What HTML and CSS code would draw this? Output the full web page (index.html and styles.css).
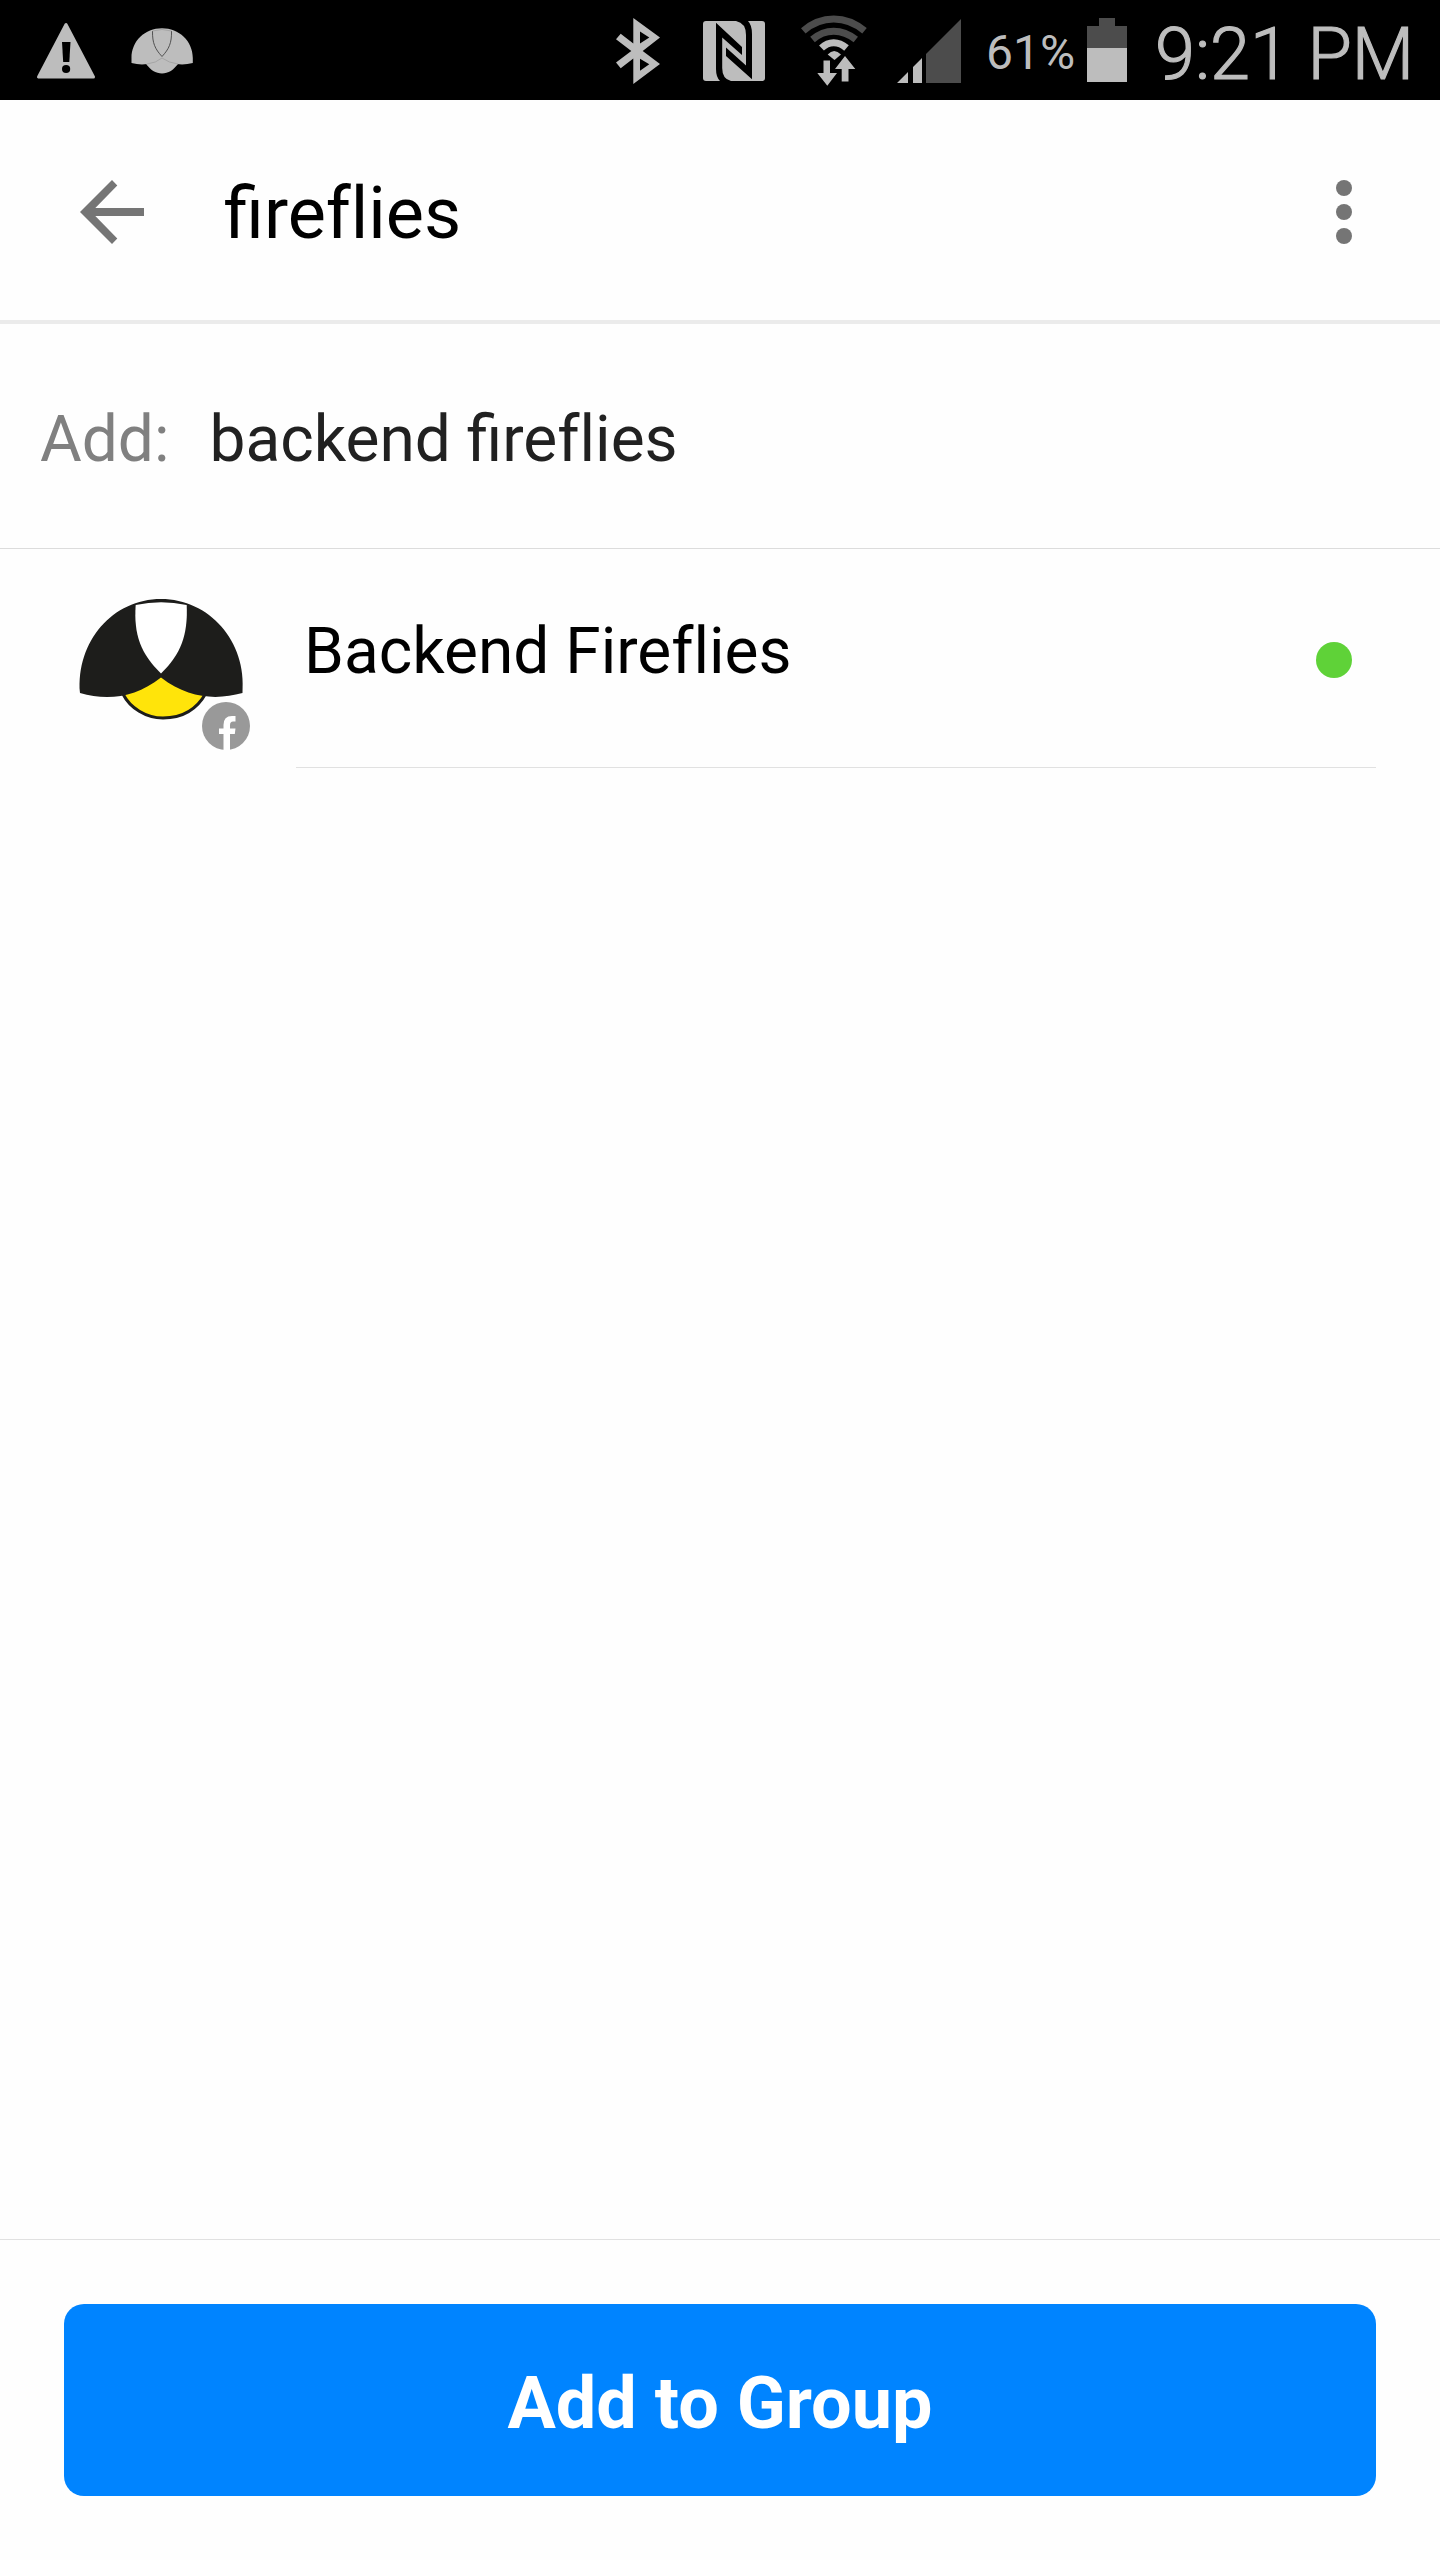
FILE: index.html
```html
<!DOCTYPE html>
<html lang="en">
<head>
<meta charset="utf-8">
<title>fireflies</title>
<link rel="stylesheet" href="styles.css">
</head>
<body>
<div class="screen">
  <div class="status-bar">
    <svg class="status-icon" width="70" height="100" viewBox="30 0 70 100">
      <path d="M66 24.5 38.500 77H93.500Z" fill="#bdbdbd" stroke="#bdbdbd" stroke-width="3" stroke-linejoin="round"/>
      <path d="M62 42h8.500l-1.200 20h-6.100z"/>
      <circle cx="66.100" cy="69" r="4.100"/>
    </svg>
    <svg class="status-icon firefly-small" width="70" height="100" viewBox="128 0 70 100">
      <path d="M145.500 63C150 70 156 73.500 162 73.500S174 70 178.500 63L162 56Z" fill="#bdbdbd"/>
      <path d="M131.500 63V58C131.500 41 145 28.300 162 28.300S192.800 41 192.800 58V63C181 66 170 64 162 58C154 64 143 66 131.500 63Z" fill="#bdbdbd"/>
      <path d="M152.500 31C152.300 43 155 49 162 56.500C169 49 171.800 43 171.500 31" fill="none" stroke="#444" stroke-width="0.900"/>
      <path d="M152.500 31Q162 28 171.500 31M147 64Q156 63 162 58Q169 63 178 64" fill="none" stroke="#a5a5a5" stroke-width="1"/>
    </svg>
    <div class="status-right">
      <svg class="status-icon" width="70" height="100" viewBox="606 0 70 100">
        <path fill-rule="evenodd" d="M633.300 18 660 37.500 642.700 51 660 64 633.300 84V58.500L620.700 68.300 616 62.500 631.300 51 616 39.200 620.700 33.700 633.300 43.500ZM640 31.500V43.500L649.300 37.500ZM640 58.700V70.700L649.300 64.300Z" fill="#bdbdbd"/>
      </svg>
      <svg class="status-icon" width="70" height="100" viewBox="702 0 70 100">
        <rect x="703" y="21" width="62" height="60" rx="3" fill="#bdbdbd"/>
        <path d="M716 22.700 742 47V55L722.200 37.500V68Q722.200 79 731 81H720Q716 77 716 69Z"/>
        <path d="M752 79.300 726 56V47.500L746 65.500V35Q746 23 736 21H748Q752 25 752 34Z"/>
      </svg>
      <svg class="status-icon" width="70" height="100" viewBox="798 0 70 100">
        <g fill="none" stroke="#4c4c4c" stroke-width="7">
          <path d="M803.300 30.800Q817 19 833.700 19T864.500 30.800"/>
          <path d="M812.500 39.500Q822 31.200 833.700 31.200T855.800 39.500"/>
        </g>
        <path d="M821.500 48Q827 42.700 833.700 42.700T846.500 48" fill="none" stroke="#bdbdbd" stroke-width="7"/>
        <path d="M827.700 54.500Q834 47.500 841 54.500L834.500 60Z" fill="#bdbdbd"/>
        <path d="M823.500 60.500H830V73H837L827.300 85.700 817.300 73H823.500ZM845 56 855.300 69H848.500V81.500H841.700V69H835Z" fill="#bdbdbd"/>
      </svg>
      <svg class="status-icon" width="70" height="100" viewBox="894 0 70 100">
        <path d="M961 19V83H926V54Z" fill="#4c4c4c"/>
        <path d="M897 83 908 72V83ZM913 83V67L922 58V83Z" fill="#bdbdbd"/>
      </svg>
      <span class="battery-level">61%</span>
      <svg class="status-icon battery" width="40" height="100" viewBox="1087 0 40 100" shape-rendering="crispEdges">
        <path d="M1099 18H1115V26H1127V48H1087V26H1099Z" fill="#4c4c4c"/>
        <path d="M1087 48H1127V82H1087Z" fill="#bdbdbd"/>
      </svg>
      <span class="clock">9:21 PM</span>
    </div>
  </div>

  <header class="app-bar">
    <svg class="back" width="64" height="64" viewBox="0 0 64 64">
      <path d="M64 28H15.300L37.300 5.600 32 0 0 32 32 64 37.300 58.400 15.300 36H64Z" fill="#757575"/>
    </svg>
    <h1 class="title">firef&zwnj;lies</h1>
    <svg class="more" width="16" height="64" viewBox="0 0 16 64" fill="#757575">
      <circle cx="8" cy="8" r="8"/><circle cx="8" cy="32" r="8"/><circle cx="8" cy="56" r="8"/>
    </svg>
  </header>

  <div class="add-row">
    <span class="add-label">Add:</span>
    <span class="add-value">backend firef&zwnj;lies</span>
  </div>

  <main class="results">
    <div class="contact">
      <svg class="avatar" width="180" height="180" viewBox="72 582 180 180">
        <path d="M123 694C130 708 146 718 163 718S196 711 206 693L161 675Z" fill="#ffe40a" stroke="#1d1d1b" stroke-width="3"/>
        <path d="M80 693C76 641 113 599 161 599S247 641 242.500 693C217 700 189 699 161 677.500C135 698 107 701 80 693Z" fill="#1d1d1b"/>
        <path d="M135.700 605Q161 599.500 186.700 605C188 635 181 654 161 673.500C141 654 133.500 635 135.700 605Z" fill="#fff"/>
        <circle cx="226" cy="726" r="24" fill="#999"/>
        <path d="M223.500 750V734H219V728.500H223.500V725Q223.500 716 232 716H235.500V721.500H233Q230 721.500 230 725V728.500H235.500L234.800 734H230V750Z" fill="#fff"/>
      </svg>
      <div class="contact-body">
        <span class="contact-name">Backend Firef&zwnj;lies</span>
        <span class="online"></span>
      </div>
    </div>
  </main>

  <footer class="action-bar">
    <button class="add-button">Add to Group</button>
  </footer>
</div>
</body>
</html>
```

FILE: styles.css
```css
* { box-sizing: border-box; }

body {
  margin: 0;
  background: #fff;
  font-family: Roboto, "Noto Sans", sans-serif;
}

.screen {
  display: flex;
  flex-direction: column;
  width: 1440px;
  height: 2560px;
  background: #fefefe;
}

.status-bar {
  display: flex;
  height: 100px;
  padding-left: 30px;
  background: #000;
  color: #bdbdbd;
}

.status-icon { flex: none; display: block; }
.firefly-small { margin-left: 28px; }

.status-right {
  display: flex;
  margin-left: auto;
  padding-right: 26px;
  gap: 26px;
}

.battery-level {
  width: 101px;
  margin-left: -4px;
  font-size: 48px;
  line-height: 105px;
  white-space: nowrap;
}

.battery { margin-left: -26px; }

.clock {
  width: 259px;
  margin-left: 2px;
  font-size: 72px;
  font-weight: 300;
  line-height: 110px;
  white-space: nowrap;
  -webkit-text-stroke: 1.2px #bdbdbd;
}

.app-bar {
  display: flex;
  align-items: center;
  height: 224px;
  padding: 4px 88px 0 80px;
  border-bottom: 4px solid #ebebeb;
}

.title {
  margin: 4px 0 0 80px;
  font-size: 72px;
  font-weight: 400;
  line-height: 84px;
  color: #000;
}

.more { margin-left: auto; }

.add-row {
  display: flex;
  height: 225px;
  padding: 78px 40px 0;
  gap: 40px;
  border-bottom: 1px solid #dcdcdc;
  font-size: 64px;
  line-height: 75px;
}

.add-label { color: #808080; }
.add-value { color: #212121; }

.results { flex: 1; }

.contact {
  display: flex;
  height: 219px;
  padding: 0 64px 0 72px;
}

.avatar { margin-top: 33px; flex: none; }

.contact-body {
  display: flex;
  flex: 1;
  justify-content: space-between;
  margin-left: 44px;
  padding: 65px 24px 0 8px;
  border-bottom: 1px solid #e1e1e1;
}

.contact-name {
  font-size: 64px;
  line-height: 75px;
  color: #000;
}

.online {
  width: 36px;
  height: 36px;
  margin-top: 28px;
  border-radius: 50%;
  background: #5fd238;
}

.action-bar {
  height: 321px;
  padding: 64px;
  border-top: 1px solid #e1e1e1;
}

.add-button {
  display: block;
  width: 100%;
  height: 192px;
  padding: 8px 0 0;
  border: 0;
  border-radius: 20px;
  background: #0084ff;
  color: #fff;
  font: 700 72px/84px Roboto, "Noto Sans", sans-serif;
}
```
